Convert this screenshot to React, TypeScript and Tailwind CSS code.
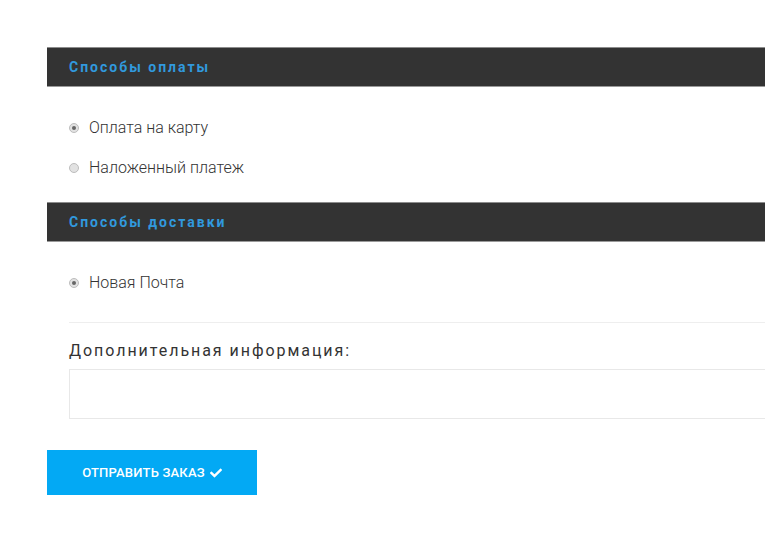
import React from 'react';
import { FaCheck } from 'react-icons/fa';

const font = { fontFamily: 'Roboto, "Noto Sans", sans-serif' };

const SectionBar: React.FC<{ title: string }> = ({ title }) => (
  <div className="h-[40px] bg-[#333333] border-t border-t-[#8c8c8c] border-b border-b-[#9a9a9a] flex items-center px-[22px]">
    <span className="text-[14px] font-bold tracking-[2px] text-[#3199dd]">{title}</span>
  </div>
);

const Radio: React.FC<{ label: string; checked?: boolean }> = ({ label, checked }) => (
  <label className="h-[40px] flex items-center gap-[10px] pl-[22px] text-[16px] font-light text-[#333]">
    <span className="w-[10px] h-[10px] rounded-full border border-[#bdbdbd] bg-[#e2e2e2] flex items-center justify-center">
      {checked && <span className="w-[4px] h-[4px] rounded-full bg-[#666]" />}
    </span>
    {label}
  </label>
);

export default function App() {
  return (
    <div className="w-[765px] h-[548px] overflow-hidden bg-white" style={font}>
      <div className="ml-[47px] w-[760px] pt-[47px]">
        <SectionBar title="Способы оплаты" />
        <div className="pt-[21px] pb-[14px]">
          <Radio label="Оплата на карту" checked />
          <Radio label="Наложенный платеж" />
        </div>
        <SectionBar title="Способы доставки" />
        <div className="pt-[21px] pl-[22px]">
          <div className="-ml-[22px]">
            <Radio label="Новая Почта" checked />
          </div>
          <div className="mt-[19px] border-t border-[#eeeeee]" />
          <div className="mt-[18px] h-[20px] flex items-center text-[16px] tracking-[1.95px] text-[#333]">
            Дополнительная информация:
          </div>
          <textarea className="mt-[8px] block w-full h-[50px] border border-[#e8e8e8] bg-white resize-none outline-none" />
        </div>
        <button className="mt-[31px] w-[210px] h-[45px] bg-[#03a9f4] text-white text-[13px] font-medium tracking-[0.2px] flex items-center justify-center gap-[5px]">
          ОТПРАВИТЬ ЗАКАЗ <FaCheck className="w-[12px] h-[12px]" />
        </button>
      </div>
    </div>
  );
}
